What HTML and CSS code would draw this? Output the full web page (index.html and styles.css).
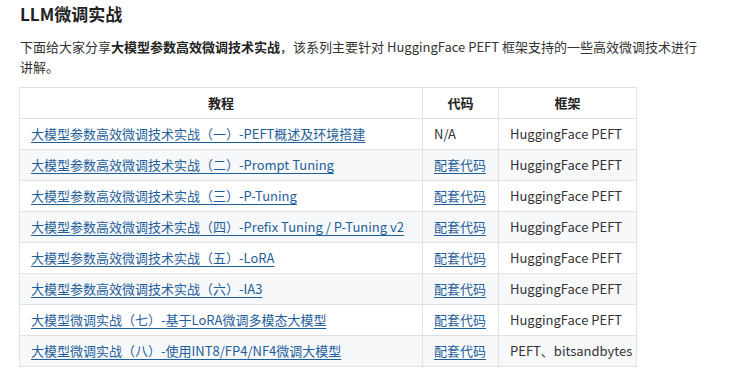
FILE: index.html
```html
<!DOCTYPE html>
<html lang="zh">
<head>
<meta charset="utf-8">
<link rel="stylesheet" href="styles.css">
</head>
<body>
<div class="page">
  <h2 class="title">LLM微调实战</h2>
  <p class="intro">下面给大家分享<strong>大模型参数高效微调技术实战</strong>，该系列主要针对 HuggingFace PEFT 框架支持的一些高效微调技术进行讲解。</p>
  <table class="grid">
    <colgroup><col class="c1"><col class="c2"><col class="c3"></colgroup>
    <thead>
      <tr><th>教程</th><th>代码</th><th>框架</th></tr>
    </thead>
    <tbody>
      <tr><td><a href="#">大模型参数高效微调技术实战（一）-PEFT概述及环境搭建</a></td><td>N/A</td><td>HuggingFace PEFT</td></tr>
      <tr><td><a href="#">大模型参数高效微调技术实战（二）-Prompt Tuning</a></td><td><a href="#">配套代码</a></td><td>HuggingFace PEFT</td></tr>
      <tr><td><a href="#">大模型参数高效微调技术实战（三）-P-Tuning</a></td><td><a href="#">配套代码</a></td><td>HuggingFace PEFT</td></tr>
      <tr><td><a href="#">大模型参数高效微调技术实战（四）-Prefix Tuning / P-Tuning v2</a></td><td><a href="#">配套代码</a></td><td>HuggingFace PEFT</td></tr>
      <tr><td><a href="#">大模型参数高效微调技术实战（五）-LoRA</a></td><td><a href="#">配套代码</a></td><td>HuggingFace PEFT</td></tr>
      <tr><td><a href="#">大模型参数高效微调技术实战（六）-IA3</a></td><td><a href="#">配套代码</a></td><td>HuggingFace PEFT</td></tr>
      <tr><td><a href="#">大模型微调实战（七）-基于LoRA微调多模态大模型</a></td><td><a href="#">配套代码</a></td><td>HuggingFace PEFT</td></tr>
      <tr><td><a href="#">大模型微调实战（八）-使用INT8/FP4/NF4微调大模型</a></td><td><a href="#">配套代码</a></td><td>PEFT、bitsandbytes</td></tr>
    </tbody>
  </table>
</div>
</body>
</html>
```
FILE: styles.css
```css
html, body {
  margin: 0;
  padding: 0;
  background: #ffffff;
}
body {
  font-family: "Noto Sans CJK SC", "Noto Sans", sans-serif;
  color: #333333;
}
.page {
  padding: 0 20px;
}
.title {
  margin: 0;
  padding-top: 2px;
  font-size: 17px;
  line-height: 24px;
  font-weight: 700;
  color: #222222;
}
.intro {
  margin: 11px 0 0 0;
  font-size: 13px;
  line-height: 20px;
  width: 684px;
}
.intro strong {
  font-weight: 700;
  color: #222;
}
.grid {
  margin-top: 10px;
  margin-left: -1px;
  border-collapse: collapse;
  table-layout: fixed;
  width: 617px;
  font-size: 13px;
}
.c1 { width: 403px; }
.c2 { width: 76px; }
.c3 { width: 138px; }
.grid th, .grid td {
  border: 1px solid #dfe2e5;
  height: 31px;
  padding: 0 11px;
  box-sizing: border-box;
  white-space: nowrap;
  line-height: 20px;
}
.grid th {
  font-weight: 700;
  text-align: center;
  color: #222;
}
.grid td {
  text-align: left;
}
.grid tbody tr:nth-child(even) {
  background: #f6f8fa;
}
.grid a {
  color: #1f5e9b;
  text-decoration: underline;
  text-underline-offset: 3px;
}
```
